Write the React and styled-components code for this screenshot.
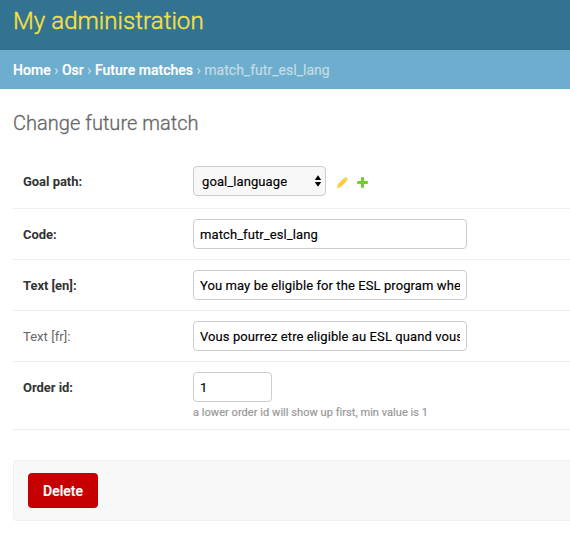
import React from "react";
import styled, { createGlobalStyle } from "styled-components";

const Global = createGlobalStyle`
  * { box-sizing: border-box; }
  body { margin: 0; background: #fff; font-family: Roboto, "Liberation Sans", sans-serif; font-size: 13px; color: #333; overflow: hidden; }
`;
const Page = styled.div`width: 570px; height: 536px; overflow: hidden; background: #fff;`;
const Header = styled.header`
  height: 50px; padding: 6px 13px 0; background: #327391;
`;
const Brand = styled.h1`
  margin: 0; font-size: 24px; font-weight: 300; line-height: 30px; color: #f8e23f; white-space: nowrap;
  letter-spacing: 0.06px; -webkit-text-stroke: 0.4px #f8e23f;
`;
const Crumbs = styled.nav`
  height: 39px; padding: 0 13px; background: #6dadcd; color: #c4dce8; font-size: 14px; line-height: 41px; white-space: nowrap;
  letter-spacing: 0.02px; -webkit-text-stroke: 0.2px;
`;
const Crumb = styled.a`color: #fff; font-weight: 500;`;
const Content = styled.main`padding: 21px 0 0 13px;`;
const Title = styled.h2`
  margin: 0; height: 46px; font-size: 20px; font-weight: 300; line-height: 26px; color: #666;
  letter-spacing: 0.03px; -webkit-text-stroke: 0.3px #666;
`;
const Row = styled.div`
  display: flex; height: ${(p) => p.$h}px; padding: 10px; border-bottom: 1px solid #eee;
`;
const Label = styled.label`
  width: 170px; flex: none; line-height: 32px; font-weight: ${(p) => (p.$optional ? 400 : 700)}; color: ${(p) => (p.$optional ? "#666" : "#333")};
  letter-spacing: ${(p) => (p.$optional ? "0.04px" : "-0.04px")};
`;
const Field = styled.input`
  display: block; width: ${(p) => p.$w}px; height: 30px; padding: 5px 6px; border: 1px solid #ccc; border-radius: 4px;
  font: 13px Roboto, sans-serif; letter-spacing: 0.09px; color: #000; background: #fff; outline: none;
  -webkit-text-stroke: 0.15px #000;
`;
const Select = styled.div`
  display: flex; align-items: center; justify-content: space-between; width: 133px; height: 30px; padding: 0 3px 0 8px;
  border: 1px solid #ccc; border-radius: 4px; background: #f8f8f8; color: #000; letter-spacing: 0.09px;
  -webkit-text-stroke: 0.15px #000;
`;
const Actions = styled.div`display: flex; gap: 7px; margin-left: 10px; align-items: center; height: 32px;`;
const Help = styled.p`
  margin: 3px 0 0; font-size: 11px; line-height: 15px; color: #999; letter-spacing: 0.05px; -webkit-text-stroke: 0.2px #999;
`;
const Submit = styled.div`
  height: 61px; margin-top: 30px; padding: 12px 14px; border: 1px solid #eee; border-right: 0; border-radius: 4px 0 0 4px; background: #f8f8f8;
`;
const Delete = styled.button`
  width: 70px; height: 35px; border: 0; padding: 0; border-radius: 4px; background: #c60000; color: #fff; font: 500 14px Roboto, sans-serif;
  -webkit-text-stroke: 0.2px #fff;
`;

export default function App() {
  return (
    <Page>
      <Global />
      <Header><Brand>My administration</Brand></Header>
      <Crumbs><Crumb>Home</Crumb> › <Crumb>Osr</Crumb> › <Crumb>Future matches</Crumb> › match_futr_esl_lang</Crumbs>
      <Content>
        <Title>Change future match</Title>
        <Row $h={53}>
          <Label>Goal path:</Label>
          <Select>goal_language
            <svg width="8" height="12" viewBox="0 0 8 12"><path d="M4 0.3 7.2 5H.8ZM.8 7h6.4L4 11.7Z" fill="#000" /></svg>
          </Select>
          <Actions>
            <svg width="13" height="13" viewBox="0 0 13 13">
              <path d="M1 12 1.5 8.7 8.6 1.6Q9.4 .8 10.3 1.6L11.5 2.8Q12.2 3.6 11.4 4.4L4.3 11.4Z" fill="#fbcb3d" />
              <path d="M8 2.3 10.8 5.1" stroke="#fff" strokeWidth="0.6" opacity="0.7" />
              <path d="M2 9.2 3.8 11" stroke="#fff" strokeWidth="0.8" opacity="0.6" />
            </svg>
            <svg width="13" height="13" viewBox="0 0 13 13"><path fill="#70cd32" d="M5 1.3h3v3.8h3.8v3H8v3.7H5V8.1H1.2v-3H5Z" /></svg>
          </Actions>
        </Row>
        <Row $h={51}><Label>Code:</Label><Field $w={274} defaultValue="match_futr_esl_lang" /></Row>
        <Row $h={51}><Label>Text [en]:</Label><Field $w={274} defaultValue="You may be eligible for the ESL program when you complete" /></Row>
        <Row $h={51}><Label $optional>Text [fr]:</Label><Field $w={274} defaultValue="Vous pourrez etre eligible au ESL quand vous aurez" /></Row>
        <Row $h={68}>
          <Label>Order id:</Label>
          <div><Field $w={79} defaultValue="1" /><Help>a lower order id will show up first, min value is 1</Help></div>
        </Row>
        <Submit><Delete>Delete</Delete></Submit>
      </Content>
    </Page>
  );
}
